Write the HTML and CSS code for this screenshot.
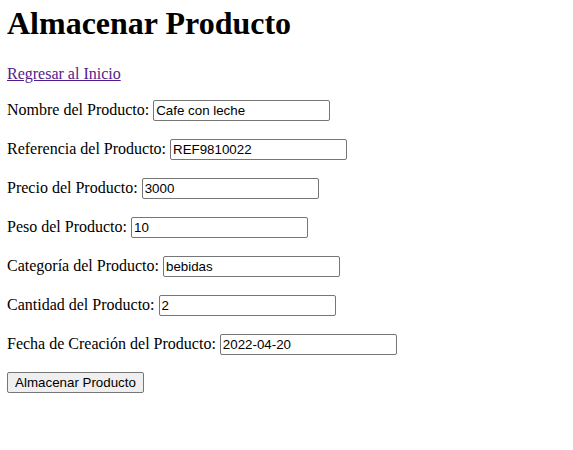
FILE: index.html
```html
<!DOCTYPE html>
<html lang="es">
<head>
<meta charset="utf-8">
<title>Almacenar Producto</title>
<link rel="stylesheet" href="styles.css">
</head>
<body class="page">
<h1 class="title">Almacenar Producto</h1>
<p class="row"><a class="back" href="#">Regresar al Inicio</a></p>
<form class="form">
<p class="row"><label class="lbl">Nombre del Producto: <input class="field" type="text" value="Cafe con leche"></label></p>
<p class="row"><label class="lbl">Referencia del Producto: <input class="field" type="text" value="REF9810022"></label></p>
<p class="row"><label class="lbl">Precio del Producto: <input class="field" type="text" value="3000"></label></p>
<p class="row"><label class="lbl">Peso del Producto: <input class="field" type="text" value="10"></label></p>
<p class="row"><label class="lbl">Categoría del Producto: <input class="field" type="text" value="bebidas"></label></p>
<p class="row"><label class="lbl">Cantidad del Producto: <input class="field" type="text" value="2"></label></p>
<p class="row"><label class="lbl">Fecha de Creación del Producto: <input class="field" type="text" value="2022-04-20"></label></p>
<p class="row"><button class="btn" type="button">Almacenar Producto</button></p>
</form>
</body>
</html>
```
FILE: styles.css
```css
.page {
  margin: 5px 8px 8px 7px;
  font-family: "Liberation Serif", "Times New Roman", serif;
  font-size: 16px;
  color: #000;
  background: #fff;
}
.title {
  font-size: 32px;
  font-weight: bold;
  margin: 0 0 23px;
}
.row {
  margin: 16px 0;
}
.back {
  color: #551a8b;
  text-decoration: underline;
}
.form {
  margin: 0;
}
.field {
  box-sizing: border-box;
  width: 177px;
  height: 21px;
  margin: 1px 0;
  font-family: "Liberation Sans", Arial, sans-serif;
  font-size: 13.33px;
  padding: 1px 2px;
  border: 1px solid #767676;
  border-radius: 2px;
  color: #000;
  background: #fff;
}
.btn {
  box-sizing: border-box;
  width: 137px;
  height: 21px;
  margin: 0;
  font-family: "Liberation Sans", Arial, sans-serif;
  font-size: 13.33px;
  padding: 1px 6px;
  border: 1px solid #767676;
  border-radius: 2px;
  background: #efefef;
  color: #000;
}
```
